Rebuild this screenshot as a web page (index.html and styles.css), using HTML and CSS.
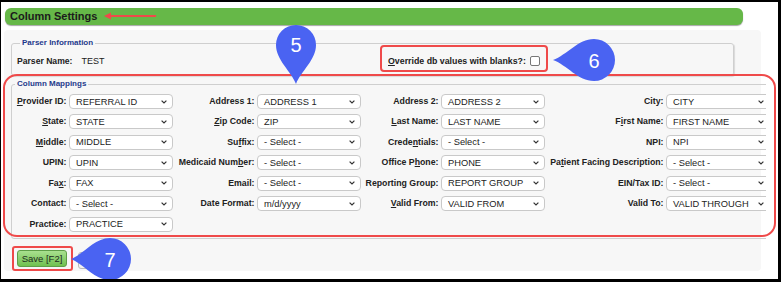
FILE: index.html
```html
<!DOCTYPE html>
<html>
<head>
<meta charset="utf-8">
<link rel="stylesheet" href="styles.css">
</head>
<body>
<div class="frame">
  <div class="titlebar">Column Settings</div>
  <div class="panel">
    <fieldset class="fs parser">
      <legend>Parser Information</legend>
      <div class="parser-row">
        <div class="pname"><b>Parser Name:</b><span class="pval">TEST</span></div>
        <label class="override"><b><u>O</u>verride db values with blanks?:</b><span class="cb"></span></label>
      </div>
    </fieldset>
    <div class="mapclip">
      <fieldset class="fs map">
        <legend>Column Mappings</legend>
        <div class="grid">
          <div class="lbl"><u>P</u>rovider ID:</div><div class="sel"><span>REFERRAL ID</span><svg class="chev" viewBox="0 0 6 4"><path d="M0.6 0.6L3 3L5.4 0.6"/></svg></div>
          <div class="lbl">Address 1:</div><div class="sel"><span>ADDRESS 1</span><svg class="chev" viewBox="0 0 6 4"><path d="M0.6 0.6L3 3L5.4 0.6"/></svg></div>
          <div class="lbl">Address 2:</div><div class="sel"><span>ADDRESS 2</span><svg class="chev" viewBox="0 0 6 4"><path d="M0.6 0.6L3 3L5.4 0.6"/></svg></div>
          <div class="lbl">City:</div><div class="sel"><span>CITY</span><svg class="chev" viewBox="0 0 6 4"><path d="M0.6 0.6L3 3L5.4 0.6"/></svg></div>

          <div class="lbl"><u>S</u>tate:</div><div class="sel"><span>STATE</span><svg class="chev" viewBox="0 0 6 4"><path d="M0.6 0.6L3 3L5.4 0.6"/></svg></div>
          <div class="lbl"><u>Z</u>ip Code:</div><div class="sel"><span>ZIP</span><svg class="chev" viewBox="0 0 6 4"><path d="M0.6 0.6L3 3L5.4 0.6"/></svg></div>
          <div class="lbl"><u>L</u>ast Name:</div><div class="sel"><span>LAST NAME</span><svg class="chev" viewBox="0 0 6 4"><path d="M0.6 0.6L3 3L5.4 0.6"/></svg></div>
          <div class="lbl">F<u>i</u>rst Name:</div><div class="sel"><span>FIRST NAME</span><svg class="chev" viewBox="0 0 6 4"><path d="M0.6 0.6L3 3L5.4 0.6"/></svg></div>

          <div class="lbl"><u>M</u>iddle:</div><div class="sel"><span>MIDDLE</span><svg class="chev" viewBox="0 0 6 4"><path d="M0.6 0.6L3 3L5.4 0.6"/></svg></div>
          <div class="lbl">Su<u>f</u>fix:</div><div class="sel"><span>- Select -</span><svg class="chev" viewBox="0 0 6 4"><path d="M0.6 0.6L3 3L5.4 0.6"/></svg></div>
          <div class="lbl">Crede<u>n</u>tials:</div><div class="sel"><span>- Select -</span><svg class="chev" viewBox="0 0 6 4"><path d="M0.6 0.6L3 3L5.4 0.6"/></svg></div>
          <div class="lbl">NPI:</div><div class="sel"><span>NPI</span><svg class="chev" viewBox="0 0 6 4"><path d="M0.6 0.6L3 3L5.4 0.6"/></svg></div>

          <div class="lbl">UPIN:</div><div class="sel"><span>UPIN</span><svg class="chev" viewBox="0 0 6 4"><path d="M0.6 0.6L3 3L5.4 0.6"/></svg></div>
          <div class="lbl">Medicaid Num<u>b</u>er:</div><div class="sel"><span>- Select -</span><svg class="chev" viewBox="0 0 6 4"><path d="M0.6 0.6L3 3L5.4 0.6"/></svg></div>
          <div class="lbl">Office P<u>h</u>one:</div><div class="sel"><span>PHONE</span><svg class="chev" viewBox="0 0 6 4"><path d="M0.6 0.6L3 3L5.4 0.6"/></svg></div>
          <div class="lbl">Pa<u>t</u>ient Facing Description:</div><div class="sel"><span>- Select -</span><svg class="chev" viewBox="0 0 6 4"><path d="M0.6 0.6L3 3L5.4 0.6"/></svg></div>

          <div class="lbl">Fa<u>x</u>:</div><div class="sel"><span>FAX</span><svg class="chev" viewBox="0 0 6 4"><path d="M0.6 0.6L3 3L5.4 0.6"/></svg></div>
          <div class="lbl">Email:</div><div class="sel"><span>- Select -</span><svg class="chev" viewBox="0 0 6 4"><path d="M0.6 0.6L3 3L5.4 0.6"/></svg></div>
          <div class="lbl">Reporting Group:</div><div class="sel"><span>REPORT GROUP</span><svg class="chev" viewBox="0 0 6 4"><path d="M0.6 0.6L3 3L5.4 0.6"/></svg></div>
          <div class="lbl">EIN/Tax ID:</div><div class="sel"><span>- Select -</span><svg class="chev" viewBox="0 0 6 4"><path d="M0.6 0.6L3 3L5.4 0.6"/></svg></div>

          <div class="lbl">Contact:</div><div class="sel"><span>- Select -</span><svg class="chev" viewBox="0 0 6 4"><path d="M0.6 0.6L3 3L5.4 0.6"/></svg></div>
          <div class="lbl">Date Format:</div><div class="sel"><span>m/d/yyyy</span><svg class="chev" viewBox="0 0 6 4"><path d="M0.6 0.6L3 3L5.4 0.6"/></svg></div>
          <div class="lbl"><u>V</u>alid From:</div><div class="sel"><span>VALID FROM</span><svg class="chev" viewBox="0 0 6 4"><path d="M0.6 0.6L3 3L5.4 0.6"/></svg></div>
          <div class="lbl">Valid To:</div><div class="sel"><span>VALID THROUGH</span><svg class="chev" viewBox="0 0 6 4"><path d="M0.6 0.6L3 3L5.4 0.6"/></svg></div>

          <div class="lbl">Practice:</div><div class="sel"><span>PRACTICE</span><svg class="chev" viewBox="0 0 6 4"><path d="M0.6 0.6L3 3L5.4 0.6"/></svg></div>
        </div>
      </fieldset>
    </div>
    <div class="actions">
      <button class="btn save">Save [F2]</button>
      <button class="btn close" aria-label="Close"></button>
    </div>
  </div>

  <svg class="arrow" viewBox="0 0 54 8"><path d="M1 4L8 0.5L8 7.5Z" fill="#ef4a4a"/><line x1="6" y1="4" x2="53" y2="4" stroke="#ef4a4a" stroke-width="2"/></svg>
  <div class="ring ring-override"></div>
  <div class="ring ring-map"></div>
  <div class="ring ring-save"></div>

  <svg class="pin pin5" viewBox="0 0 42 62"><path d="M21 60C16 47 1 36 1 21A20 20 0 1 1 41 21C41 36 26 47 21 60Z"/><text x="21" y="28">5</text></svg>
  <svg class="pin pin6" viewBox="0 0 64 44"><path d="M1 22C15 17 26 1 42 1A21 21 0 1 1 42 43C26 43 15 27 1 22Z"/><text x="42" y="29.5">6</text></svg>
  <svg class="pin pin7" viewBox="0 0 62 44"><path d="M1 22C14 17 24 1 40 1A21 21 0 1 1 40 43C24 43 14 27 1 22Z"/><text x="40" y="29.5">7</text></svg>
</div>
</body>
</html>
```

FILE: styles.css
```css
* { box-sizing: border-box; }
html, body { margin: 0; padding: 0; background: #000; }
body { font-family: "Liberation Sans", Arial, sans-serif; color: #222; }

.frame {
  position: relative;
  width: 781px;
  height: 282px;
  border-style: solid;
  border-color: #000;
  border-width: 2px 3px 3px 1px;
  background: #fff;
  overflow: hidden;
}

.titlebar {
  margin: 6px 0 0 4px;
  width: 738px;
  height: 17px;
  background: #66b848;
  border-radius: 6px;
  box-shadow: 0 1px 1px rgba(0,0,0,0.35);
  font-weight: bold;
  font-size: 11px;
  line-height: 17px;
  padding-left: 5px;
  color: #1b1b1b;
}

.panel {
  margin: 5px 0 0 3px;
  width: 757px;
  height: 241px;
  background: #f7f7f7;
  border-radius: 4px;
  padding: 8px 0 0 7px;
}

.fs {
  margin: 0;
  border: 1px solid #cfcfcf;
  border-radius: 3px;
  min-width: 0;
}
.fs legend {
  font-size: 8px;
  font-weight: bold;
  color: #1f3a8c;
  line-height: 10px;
  height: 10px;
  padding: 0 2px;
  margin-left: 3px;
}

.parser {
  width: 723px;
  padding: 6px 0 8px 5px;
  box-shadow: 1px 1px 1px rgba(0,0,0,0.12);
}
.parser-row {
  display: flex;
  align-items: center;
  height: 13px;
  font-size: 8.8px;
}
.pname { width: 371px; flex: none; }
.pname b { font-size: 8.6px; }
.pval { margin-left: 9px; font-size: 9px; }
.override { display: flex; align-items: center; }
.cb {
  display: inline-block;
  width: 10px;
  height: 10px;
  border: 1px solid #777;
  border-radius: 2px;
  background: #fff;
  margin-left: 4px;
}

.mapclip {
  margin-top: 3px;
  width: 755px;
  overflow: hidden;
}
.map {
  width: 820px;
  padding: 5px 0 6px 0;
}
.grid {
  display: grid;
  grid-template-columns: 57px 104px 84px 104px 80px 104px 121px 104px;
  grid-auto-rows: 15px;
  row-gap: 5.45px;
}
.lbl {
  font-size: 8.75px;
  font-weight: bold;
  text-align: right;
  padding-right: 2.5px;
  line-height: 15px;
  white-space: nowrap;
  color: #222;
}
.sel {
  display: flex;
  align-items: center;
  justify-content: space-between;
  background: #fff;
  border: 1px solid #c9c9c9;
  border-radius: 4px;
  padding: 0 5px 0 6px;
  font-size: 9.3px;
  color: #222;
  white-space: nowrap;
}
.chev {
  width: 6px;
  height: 4px;
  fill: none;
  stroke: #333;
  stroke-width: 1.2;
}

.actions {
  display: flex;
  align-items: flex-start;
  margin-top: 11px;
  padding-left: 6px;
}
.btn {
  font-family: "Liberation Sans", Arial, sans-serif;
  font-size: 9.5px;
  height: 17px;
  padding: 0;
  border-radius: 3px;
  color: #1d2a1d;
  white-space: nowrap;
}
.save {
  width: 50px;
  background: linear-gradient(#a9e08f, #6fc150);
  border: 1px solid #5e9e47;
}
.close {
  margin: 2px 0 0 11px;
  width: 42px;
  background: #f2f2f2;
  border: 1px solid #bbb;
}

.arrow {
  position: absolute;
  left: 102px;
  top: 10px;
  width: 54px;
  height: 8px;
}

.ring {
  position: absolute;
  border: 2px solid #ef4a4a;
}
.ring-override { left: 379px; top: 43px; width: 168px; height: 27px; border-radius: 4px; }
.ring-map { left: 2px; top: 72px; width: 773px; height: 163px; border-radius: 14px; }
.ring-save { left: 11px; top: 244px; width: 61px; height: 25px; border-radius: 3px; }

.pin { position: absolute; fill: #4a63f2; }
.pin text {
  fill: #fff;
  font-family: "Liberation Sans", Arial, sans-serif;
  font-size: 20px;
  text-anchor: middle;
}
.pin5 { left: 274px; top: 22px; width: 42px; height: 62px; }
.pin6 { left: 551px; top: 36px; width: 64px; height: 44px; }
.pin7 { left: 69px; top: 235px; width: 62px; height: 44px; }
```
